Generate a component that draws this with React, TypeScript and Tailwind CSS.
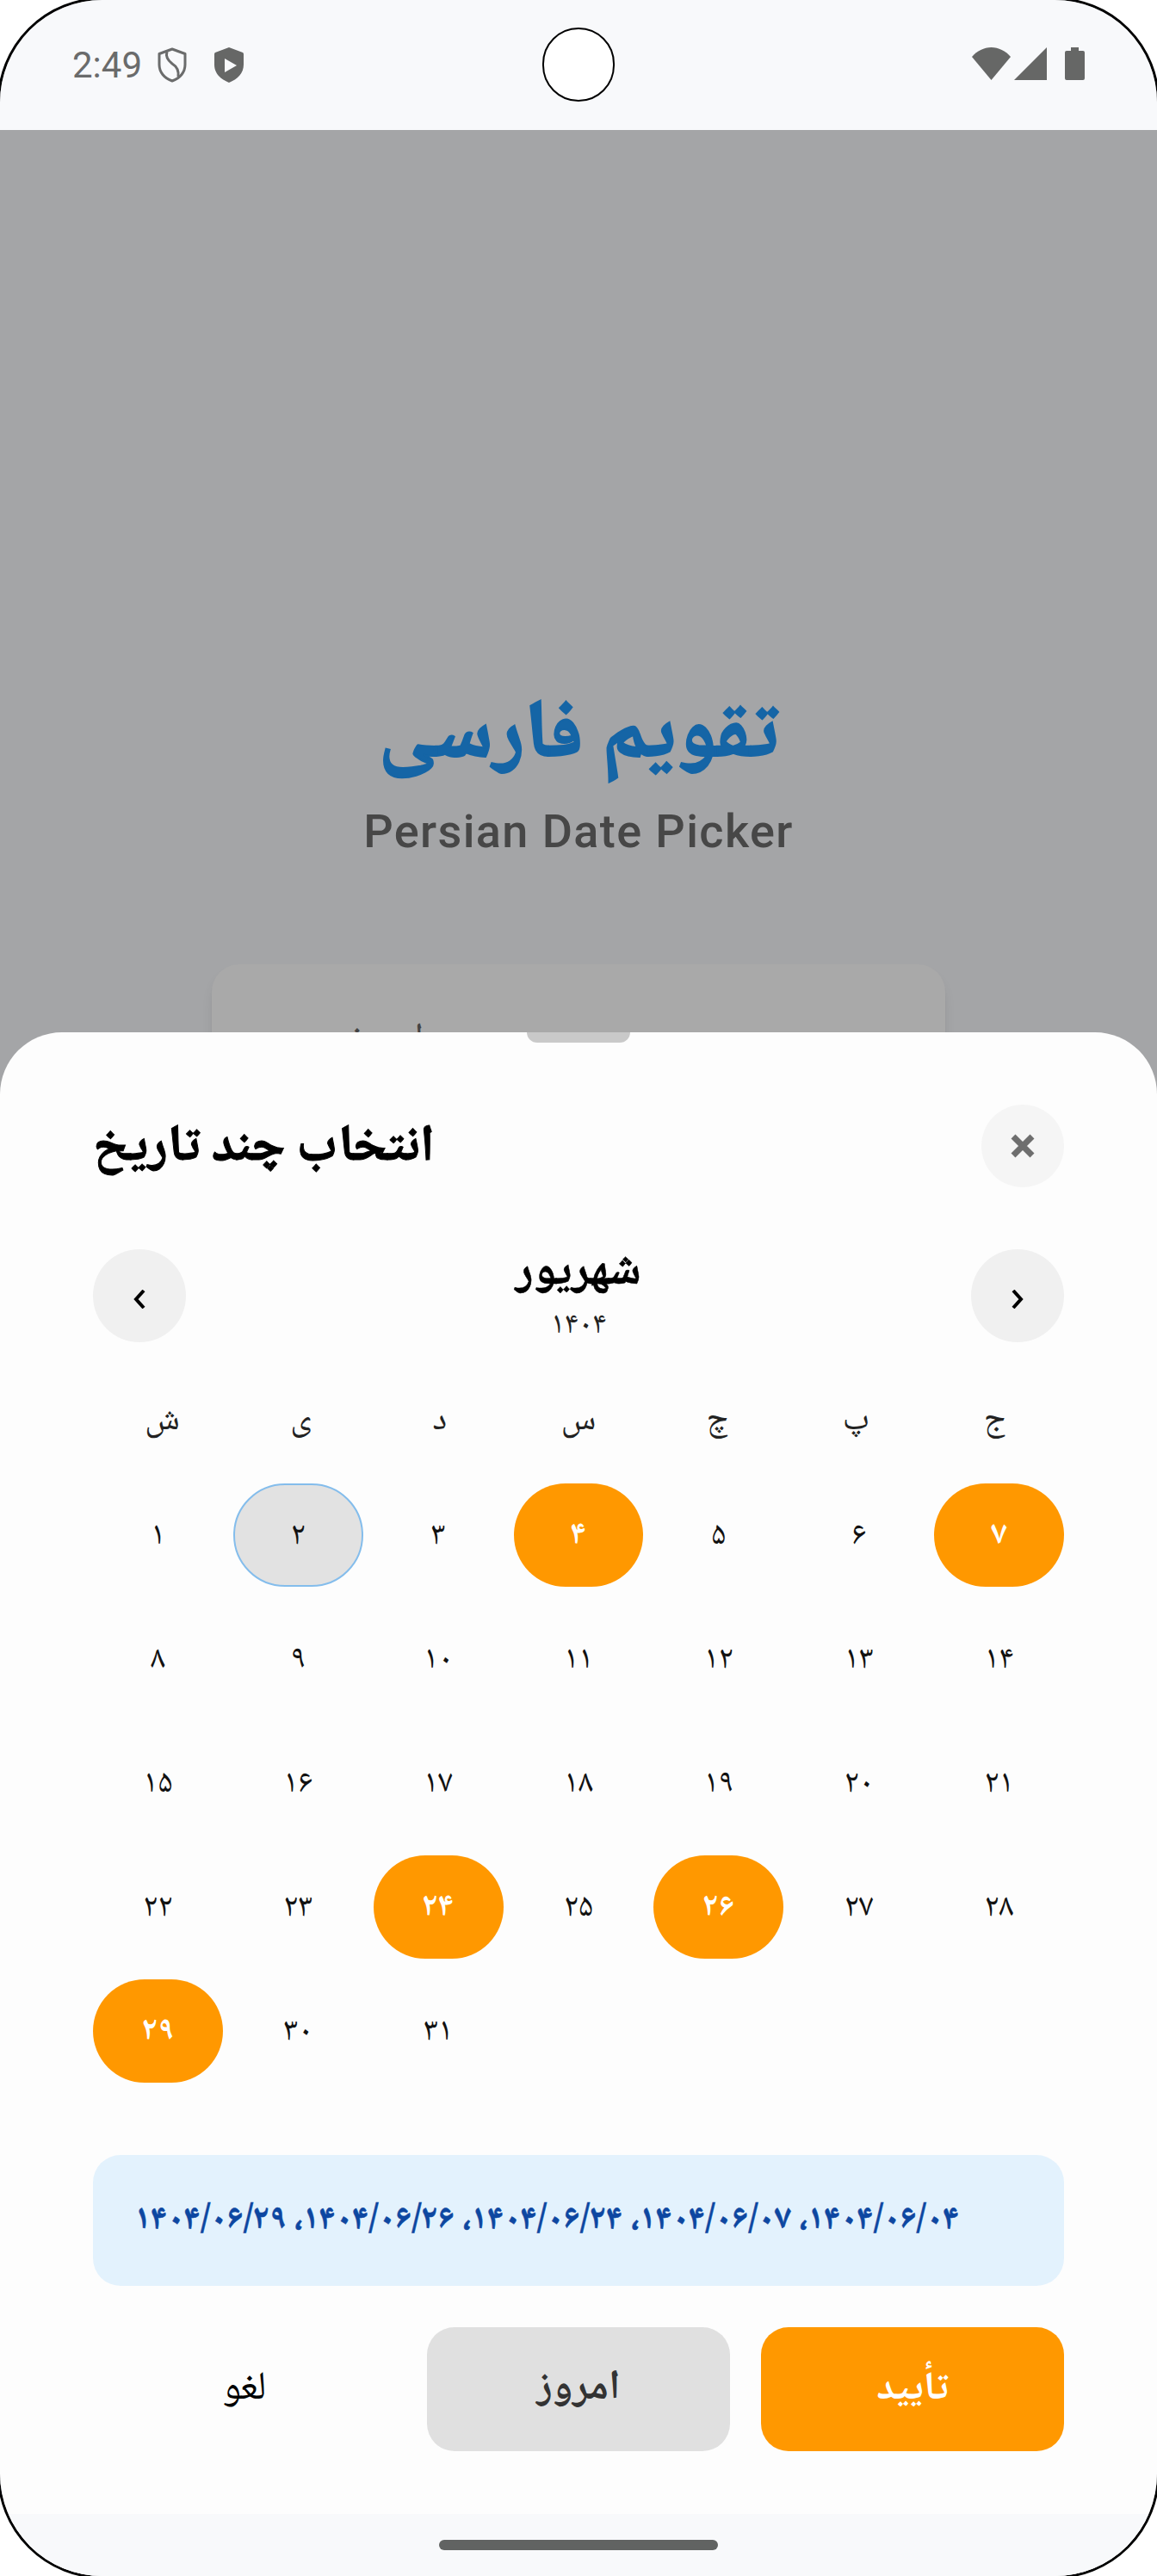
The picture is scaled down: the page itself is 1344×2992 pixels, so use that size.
const digits = ['۱','۲','۳','۴','۵','۶','۷','۸','۹','۱۰','۱۱','۱۲','۱۳','۱۴','۱۵','۱۶','۱۷','۱۸','۱۹','۲۰','۲۱','۲۲','۲۳','۲۴','۲۵','۲۶','۲۷','۲۸','۲۹','۳۰','۳۱'];
const selected = new Set([4, 7, 24, 26, 29]);
const weekdays = ['ش', 'ی', 'د', 'س', 'چ', 'پ', 'ج'];

function Shield() {
  return (
    <svg viewBox="0 0 34 41" className="w-[34px] h-[41px]" fill="none" stroke="#6b6c6c" strokeWidth="3">
      <path d="M17 2 2 7.500V20c0 9 6 16 15 19 9-3 15-10 15-19V7.500z" strokeLinejoin="round" />
      <path d="M11 5c-2 6 1 10 6 14 5 3 8 7 7 15" strokeWidth="3" />
    </svg>
  );
}
function ShieldFilled() {
  return (
    <svg viewBox="0 0 34 41" className="w-[34px] h-[41px]" fill="#666766">
      <path fillRule="evenodd" d="M17 0 1 6q-1 .5-1 2V20c0 10 7 17 17 21 10-4 17-11 17-21V8q0-1.500-1-2zM12 13v16l14-8z" />
    </svg>
  );
}

export default function App() {
  return (
    <div className="relative w-[1344px] h-[2992px] bg-white overflow-hidden font-['Noto_Naskh_Arabic','DejaVu_Sans',serif]">
      <div className="-m-[3px] w-[1350px] h-[2998px] rounded-[122px] overflow-hidden border-[3px] border-black flex flex-col relative bg-[#a4a5a7]">
        <div className="h-[151px] shrink-0 bg-[#f8f9fb] flex items-start justify-between pl-[84px] pr-[84px] pt-[52px]">
          <div className="flex items-start">
            <span className="font-['Roboto',sans-serif] text-[42px] leading-[48px] text-[#6a6b6b]">2:49</span>
            <span className="ml-[18px] mt-[3px]"><Shield /></span>
            <span className="ml-[32px] mt-[3px]"><ShieldFilled /></span>
          </div>
          <div className="flex items-start gap-[4px] pt-[3px]">
            <svg viewBox="0 0 45 38" className="w-[45px] h-[38px]" fill="#666766"><path d="M22.500 38 0 11C6 4 14 0 22.500 0S39 4 45 11z" /></svg>
            <svg viewBox="0 0 38 38" className="w-[38px] h-[38px]" fill="#666766"><path d="M38 0v38H0z" /></svg>
            <svg viewBox="0 0 23 38" className="w-[23px] h-[38px] ml-[17px]" fill="#666766"><path d="M7 0h9v4h5q2 0 2 2v30q0 2-2 2H2q-2 0-2-2V6q0-2 2-2h5z" /></svg>
          </div>
        </div>
        <div className="absolute left-[630px] top-[32px] w-[84px] h-[86px] rounded-full bg-white border-2 border-black" />
        <div className="flex flex-col items-center pt-[637px]">
          <div dir="rtl" className="text-[96px] leading-[140px] font-bold [-webkit-text-stroke:2px_#1565a6] text-[#1565a6]">تقویم فارسی</div>
          <div className="font-['Roboto',sans-serif] text-[54px] leading-[64px] font-medium tracking-[1.4px] text-[#474747] mt-[6px]">Persian Date Picker</div>
          <div className="mt-[122px] w-[852px] h-[400px] rounded-[32px] bg-[#a9a9a9] shadow-lg pt-[56px] pr-[606px] text-[#444] text-[44px]" dir="rtl">امروز</div>
        </div>
        <div className="absolute left-0 right-0 bottom-0 top-[1199px] bg-[#fdfdfd] rounded-t-[72px] flex flex-col">
          <div className="w-[120px] h-[12px] bg-[#c9c9c9] rounded-b-full self-center" />
          <div className="px-[108px] flex-1 flex flex-col">
            <div className="flex items-center justify-between mt-[72px]">
              <div dir="rtl" className="h-[96px] pt-[4px] text-[60px] font-bold [-webkit-text-stroke:1px_#000] text-black leading-[96px]">انتخاب چند تاریخ</div>
              <div className="w-[96px] h-[96px] rounded-full bg-[#f5f5f5] flex items-center justify-center">
                <svg viewBox="0 0 28 28" className="w-[28px] h-[28px]" stroke="#6e6e6e" strokeWidth="7"><path d="M3 3l22 22M25 3 3 25" /></svg>
              </div>
            </div>
            <div className="flex items-start justify-between mt-[72px] h-[108px]">
              <div className="w-[108px] h-[108px] rounded-full bg-[#f0f0f0] flex items-center justify-center pt-[8px]">
                <svg viewBox="0 0 14 22" className="w-[14px] h-[22px]" fill="none" stroke="#000" strokeWidth="4"><path d="M12 1 3 11l9 10" /></svg>
              </div>
              <div className="flex flex-col items-center">
                <div dir="rtl" className="text-[54px] font-bold [-webkit-text-stroke:0.5px_#000] leading-[56px] text-black">شهریور</div>
                <div className="text-[36px] leading-[44px] mt-[12px] text-[#222]">۱۴۰۴</div>
              </div>
              <div className="w-[108px] h-[108px] rounded-full bg-[#f0f0f0] flex items-center justify-center pt-[8px]">
                <svg viewBox="0 0 14 22" className="w-[14px] h-[22px]" fill="none" stroke="#000" strokeWidth="4"><path d="m2 1 9 10-9 10" /></svg>
              </div>
            </div>
            <div className="grid grid-cols-7 mt-[60px]">
              {weekdays.map((d) => (
                <div key={d} className="h-[64px] flex items-center justify-center text-[40px] text-[#222]">{d}</div>
              ))}
            </div>
            <div className="grid grid-cols-7 gap-x-[12px] gap-y-[24px] mt-[40px]">
              {digits.map((d, i) => {
                const n = i + 1;
                const isSel = selected.has(n);
                const isToday = n === 2;
                return (
                  <div
                    key={d}
                    className={
                      isSel
                        ? 'h-[120px] pt-[3px] rounded-[60px] bg-[#ff9800] text-white font-bold flex items-center justify-center text-[38px]'
                        : isToday
                          ? 'h-[120px] pt-[3px] rounded-[60px] bg-[#e2e2e2] border-2 border-[#84bdec] text-[#111] flex items-center justify-center text-[38px]'
                          : 'h-[120px] pt-[3px] rounded-[60px] text-[#111] flex items-center justify-center text-[38px]'
                    }
                  >
                    {d}
                  </div>
                );
              })}
            </div>
            <div dir="rtl" className="mt-[84px] h-[152px] rounded-[32px] bg-[#e3f2fd] flex items-center justify-end pl-[48px] pt-[2px]">
              <span className="text-[39.4px] font-bold [-webkit-text-stroke:0.5px_#0d47a1] text-[#0d47a1] whitespace-nowrap">۱۴۰۴/۰۶/۰۴، ۱۴۰۴/۰۶/۰۷، ۱۴۰۴/۰۶/۲۴، ۱۴۰۴/۰۶/۲۶، ۱۴۰۴/۰۶/۲۹</span>
            </div>
            <div className="flex gap-[36px] mt-[48px]">
              <div className="flex-1 h-[144px] pt-[2px] flex items-center justify-center text-[46px] text-black">لغو</div>
              <div className="flex-1 h-[144px] pt-[2px] rounded-[32px] bg-[#e0e0e0] flex items-center justify-center text-[48px] font-bold text-[#333]">امروز</div>
              <div className="flex-1 h-[144px] pt-[2px] rounded-[32px] bg-[#ff9800] flex items-center justify-center text-[46px] font-bold text-white">تأیید</div>
            </div>
          </div>
          <div className="h-[72px] bg-[#f8f9fb] flex items-start justify-center pt-[30px] shrink-0">
            <div className="w-[324px] h-[12px] rounded-full bg-[#616362]" />
          </div>
        </div>
      </div>
    </div>
  );
}
